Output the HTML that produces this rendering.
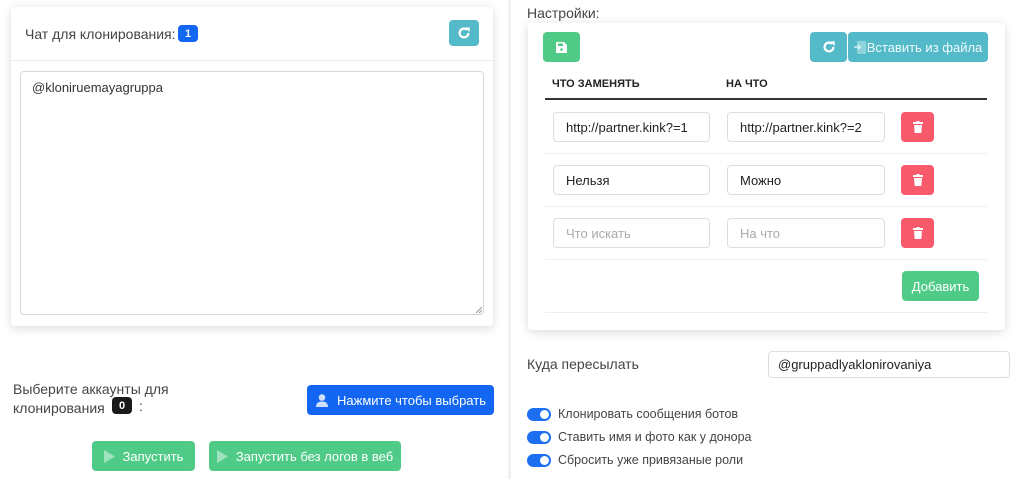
<!DOCTYPE html>
<html><head><meta charset="utf-8"><style>
*{box-sizing:border-box;margin:0;padding:0}
body{width:1024px;height:479px;background:#fff;position:relative;overflow:hidden;font-family:"Liberation Sans",sans-serif;color:#333;font-size:13px}
.a{position:absolute}
.card{position:absolute;background:#fff;border-radius:4px;box-shadow:0 2px 10px rgba(0,0,0,.15)}
.btn{position:absolute;border-radius:4px;color:#fff;display:flex;align-items:center;justify-content:center;font-size:13px}
.inp{position:absolute;border:1px solid #d9dee5;border-radius:4px;height:30px;padding-left:12px;display:flex;align-items:center;font-size:13px;color:#222;background:#fff}
.ph{color:#aaa}
.del{background:#f85a6c;width:33px;height:30px}
.sep{position:absolute;height:1px;background:#eceef0;left:545px;width:442px}
.tg{position:absolute;left:527px;width:24px;height:13px;border-radius:7px;background:#1d6ff2}
.tg:after{content:"";position:absolute;right:2px;top:2px;width:9px;height:9px;border-radius:50%;background:#fff}
.tl{position:absolute;left:558px;font-size:12.5px;color:#444}
</style></head><body>
<div class="a" style="left:508px;top:0;width:3px;height:479px;background:#eef0f2"></div>

<div class="card" style="left:11px;top:7px;width:482px;height:319px"></div>
<div class="a" style="left:11px;top:60px;width:482px;height:1px;background:#e8eaec"></div>
<div class="a" style="left:25px;top:26px;font-size:14px;color:#444">Чат для клонирования:</div>
<div class="btn" style="left:178px;top:25px;width:20px;height:17px;background:#1266f1;font-size:11px;font-weight:bold">1</div>
<div class="btn" style="left:449px;top:20px;width:30px;height:26px;background:#54b9c9">
<svg width="14" height="14" viewBox="0 0 16 16"><path d="M13 8a5 5 0 1 1-1.5-3.6" fill="none" stroke="#fff" stroke-width="2.6"/><path d="M9 1.5h5.5v5.5z" fill="#fff"/></svg></div>
<div class="a" style="left:20px;top:71px;width:464px;height:244px;border:1px solid #d4d8dd;border-radius:4px"></div>
<svg class="a" style="left:475px;top:306px" width="7" height="7" viewBox="0 0 7 7"><path d="M1 7L7 1M4 7L7 4" stroke="#999" stroke-width="1"/></svg>
<div class="a" style="left:32px;top:80px;font-size:13px;color:#333">@kloniruemayagruppa</div>

<div class="a" style="left:13px;top:380px;font-size:14px;color:#444;line-height:19px">Выберите аккаунты для<br>клонирования</div>
<div class="btn" style="left:112px;top:397px;width:20px;height:17px;background:#1a1a1a;font-size:11px;font-weight:bold">0</div>
<div class="a" style="left:139px;top:398px;font-size:14px;color:#444">:</div>
<div class="btn" style="left:307px;top:385px;width:187px;height:30px;background:#1266f1">
<svg width="14" height="13" viewBox="0 0 14 13" style="margin-right:8px"><circle cx="7" cy="3.5" r="3.3" fill="#cfe0ff"/><path d="M1 13c0-4 2.5-5.5 6-5.5s6 1.5 6 5.5z" fill="#cfe0ff"/></svg>Нажмите чтобы выбрать</div>
<div class="btn" style="left:92px;top:441px;width:103px;height:30px;background:#4fcb87">
<svg width="11" height="13" viewBox="0 0 11 13" style="margin-right:8px"><path d="M0 0l11 6.5L0 13z" fill="#9fe3be"/></svg>Запустить</div>
<div class="btn" style="left:209px;top:441px;width:192px;height:30px;background:#4fcb87">
<svg width="11" height="13" viewBox="0 0 11 13" style="margin-right:8px"><path d="M0 0l11 6.5L0 13z" fill="#9fe3be"/></svg>Запустить без логов в веб</div>

<div class="a" style="left:527px;top:5px;font-size:14px;color:#444">Настройки:</div>
<div class="card" style="left:528px;top:23px;width:477px;height:307px"></div>
<div class="btn" style="left:543px;top:32px;width:37px;height:30px;background:#4fcb87">
<svg width="11" height="11" viewBox="0 0 11 11"><path d="M0 1a1 1 0 0 1 1-1h7l3 3v7a1 1 0 0 1-1 1H1a1 1 0 0 1-1-1z" fill="#fff"/><rect x="2" y="1.5" width="5" height="2.5" fill="#4fcb87"/><circle cx="5.5" cy="7.5" r="1.3" fill="#4fcb87"/></svg></div>
<div class="btn" style="left:810px;top:32px;width:37px;height:30px;background:#54b9c9">
<svg width="14" height="14" viewBox="0 0 16 16"><path d="M13 8a5 5 0 1 1-1.5-3.6" fill="none" stroke="#fff" stroke-width="2.6"/><path d="M9 1.5h5.5v5.5z" fill="#fff"/></svg></div>
<div class="btn" style="left:848px;top:32px;width:140px;height:30px;background:#54b9c9;color:#f0fbfd">
<svg width="12" height="13" viewBox="0 0 12 13" style="margin-right:1px"><rect x="3" y="0" width="9" height="13" rx="1" fill="#8fd3dd"/><path d="M0 6h6M4 4l2.5 2L4 8" stroke="#cdeef3" stroke-width="1.5" fill="none"/></svg>Вставить из файла</div>
<div class="a" style="left:552px;top:78px;font-size:11px;font-weight:bold;color:#222">ЧТО ЗАМЕНЯТЬ</div>
<div class="a" style="left:726px;top:78px;font-size:11px;font-weight:bold;color:#222">НА ЧТО</div>
<div class="a" style="left:545px;top:98px;width:442px;height:2px;background:#333"></div>

<div class="inp" style="left:553px;top:112px;width:157px">http://partner.kink?=1</div>
<div class="inp" style="left:727px;top:112px;width:158px">http://partner.kink?=2</div>
<div class="sep" style="top:153px"></div>
<div class="inp" style="left:553px;top:165px;width:157px">Нельзя</div>
<div class="inp" style="left:727px;top:165px;width:158px">Можно</div>
<div class="sep" style="top:206px"></div>
<div class="inp ph" style="left:553px;top:218px;width:157px">Что искать</div>
<div class="inp ph" style="left:727px;top:218px;width:158px">На что</div>
<div class="sep" style="top:259px"></div>
<div class="sep" style="top:312px"></div>
<div class="btn del" style="left:901px;top:112px"><svg width="10" height="12" viewBox="0 0 10 12"><rect x="0" y="1" width="10" height="2" fill="#fff"/><rect x="3.5" y="0" width="3" height="2" fill="#fff"/><path d="M1 4h8l-.7 8H1.7z" fill="#fff"/></svg></div>
<div class="btn del" style="left:901px;top:165px"><svg width="10" height="12" viewBox="0 0 10 12"><rect x="0" y="1" width="10" height="2" fill="#fff"/><rect x="3.5" y="0" width="3" height="2" fill="#fff"/><path d="M1 4h8l-.7 8H1.7z" fill="#fff"/></svg></div>
<div class="btn del" style="left:901px;top:218px"><svg width="10" height="12" viewBox="0 0 10 12"><rect x="0" y="1" width="10" height="2" fill="#fff"/><rect x="3.5" y="0" width="3" height="2" fill="#fff"/><path d="M1 4h8l-.7 8H1.7z" fill="#fff"/></svg></div>
<div class="btn" style="left:902px;top:271px;width:77px;height:30px;background:#4fcb87">Добавить</div>

<div class="a" style="left:527px;top:356px;font-size:14px;color:#444">Куда пересылать</div>
<div class="inp" style="left:768px;top:351px;width:242px;height:27px;padding-left:9px">@gruppadlyaklonirovaniya</div>

<div class="tg" style="top:408px"></div><div class="tl" style="top:407px">Клонировать сообщения ботов</div>
<div class="tg" style="top:431px"></div><div class="tl" style="top:430px">Ставить имя и фото как у донора</div>
<div class="tg" style="top:454px"></div><div class="tl" style="top:453px">Сбросить уже привязаные роли</div>
</body></html>
